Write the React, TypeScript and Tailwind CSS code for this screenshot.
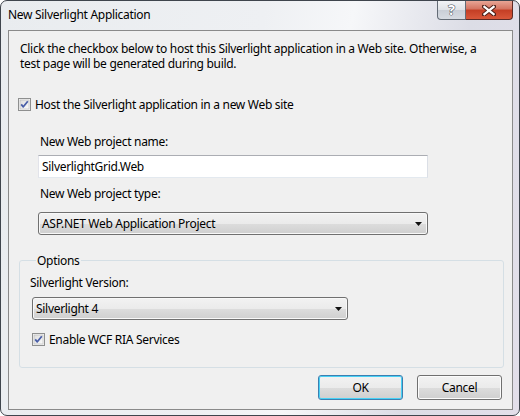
import React from "react";

/* Windows 7 "New Silverlight Application" dialog */

function CheckBox() {
  return (
    <svg width="13" height="13" viewBox="0 0 13 13" className="shrink-0">
      <defs>
        <linearGradient id="cbg" x1="0" y1="0" x2="1" y2="1">
          <stop offset="0" stopColor="#dcdcdc" />
          <stop offset="1" stopColor="#fbfbfb" />
        </linearGradient>
      </defs>
      <rect x="0.5" y="0.5" width="12" height="12" fill="#f4f4f4" stroke="#8e8f8f" />
      <rect x="2" y="2" width="9" height="9" fill="url(#cbg)" stroke="#b8b8b8" strokeWidth="0.6" />
      <path d="M3.2 6.4 L5.3 8.8 L9.8 3.2" fill="none" stroke="#4a5fa8" strokeWidth="1.8" strokeLinejoin="round" />
    </svg>
  );
}

function ArrowDown() {
  return (
    <svg width="7" height="4" viewBox="0 0 7 4" className="shrink-0">
      <path d="M0 0 H7 L3.5 4 Z" fill="#111" />
    </svg>
  );
}

function Combo({ value, className }: { value: string; className: string }) {
  return (
    <div
      className={
        "flex h-[23px] items-center justify-between rounded-[3px] border border-[#707070] pl-[3px] pr-[5px] shadow-[inset_0_0_0_1px_#f8f8f8] bg-[linear-gradient(#f2f2f2_0%,#ebebeb_50%,#dddddd_50%,#cfcfcf_100%)] " +
        className
      }
    >
      <span className="leading-[15px] text-black">{value}</span>
      <ArrowDown />
    </div>
  );
}

function Button({ label, primary }: { label: string; primary?: boolean }) {
  return (
    <div
      className={
        "flex h-[25px] w-[85px] items-center justify-center rounded-[3px] border leading-[15px] text-black bg-[linear-gradient(#f2f2f2_0%,#ebebeb_50%,#dddddd_50%,#cfcfcf_100%)] " +
        (primary
          ? "border-[#3c7fb1] shadow-[inset_0_0_0_1px_#48d1f5]"
          : "border-[#707070] shadow-[inset_0_0_0_1px_#fcfcfc]")
      }
    >
      {label}
    </div>
  );
}

export default function App() {
  return (
    <div className="flex h-[416px] w-[520px] flex-col overflow-hidden rounded-[7px] border border-[#3f454d] bg-[linear-gradient(100deg,#e9ecef_0%,#eef0f3_45%,#f6f7f9_60%,#dcdde6_80%,#e3dfea_100%)] font-['Noto_Sans',sans-serif] text-[12px] tracking-[-0.3px] text-black">
      {/* title bar */}
      <div className="flex h-[29px] shrink-0 items-start justify-between pl-[7px] pr-[6px]">
        <div className="pt-[6px] leading-[15px] text-black">New Silverlight Application</div>
        <div className="flex">
          <div className="flex h-[19px] w-[29px] items-center justify-center rounded-bl-[4px] border border-t-0 border-[#636b75] bg-[linear-gradient(#f2f3f5_0%,#dfe2e6_50%,#c9ced6_50%,#d7dbe2_100%)]">
            <span className="text-[14px] font-bold leading-[14px] text-white [-webkit-text-stroke:1px_#3d4650] [paint-order:stroke_fill]">?</span>
          </div>
          <div className="flex h-[19px] w-[47px] items-center justify-center rounded-br-[4px] border border-l-0 border-t-0 border-[#5e2a24] bg-[linear-gradient(#e8a595_0%,#d47360_45%,#c43e24_50%,#d9573a_100%)]">
            <svg width="14" height="11" viewBox="0 0 14 11">
              <path d="M2 1.5 L12 9.5 M12 1.5 L2 9.5" stroke="#4d2019" strokeWidth="4.2" strokeLinecap="square" />
              <path d="M2.4 1.8 L11.6 9.2 M11.6 1.8 L2.4 9.2" stroke="#ffffff" strokeWidth="2.2" strokeLinecap="square" />
            </svg>
          </div>
        </div>
      </div>

      {/* client area */}
      <div className="mb-[5px] ml-[7px] mr-[6px] flex flex-1 flex-col border border-[#8a8a8a] bg-[#f0f0f0]">
        <p className="pl-[11px] pr-[14px] pt-[10px] leading-[15px]">
          Click the checkbox below to host this Silverlight application in a Web site. Otherwise, a test page will be generated during build.
        </p>

        <div className="ml-[9px] mt-[26px] flex h-[15px] items-center gap-[4px]">
          <CheckBox />
          <span className="leading-[15px]">Host the Silverlight application in a new Web site</span>
        </div>

        <div className="ml-[31px] mt-[22px] leading-[15px]">New Web project name:</div>
        <div className="ml-[29px] mt-[6px] flex h-[23px] w-[390px] items-center border border-[#abadb3] border-b-[#e3e9ef] border-l-[#e2e3ea] border-r-[#dbdfe6] bg-white pl-[3px] leading-[15px]">
          SilverlightGrid.Web
        </div>

        <div className="ml-[31px] mt-[8px] leading-[15px]">New Web project type:</div>
        <Combo value="ASP.NET Web Application Project" className="ml-[29px] mt-[11px] w-[390px]" />

        <fieldset className="ml-[10px] mr-[8px] mt-[18px] rounded-[3px] border border-[#d5dfe5] pb-[20px] pl-[10px]">
          <legend className="ml-[6px] px-[1px] leading-[15px]">Options</legend>
          <div className="mt-[7px] leading-[15px]">Silverlight Version:</div>
          <Combo value="Silverlight 4" className="ml-[2px] mt-[7px] w-[316px]" />
          <div className="ml-[2px] mt-[12px] flex h-[15px] items-center gap-[4px]">
            <CheckBox />
            <span className="leading-[15px]">Enable WCF RIA Services</span>
          </div>
        </fieldset>

        <div className="mt-[7px] flex justify-end gap-[14px] pr-[10px]">
          <Button label="OK" primary />
          <Button label="Cancel" />
        </div>
      </div>
    </div>
  );
}
